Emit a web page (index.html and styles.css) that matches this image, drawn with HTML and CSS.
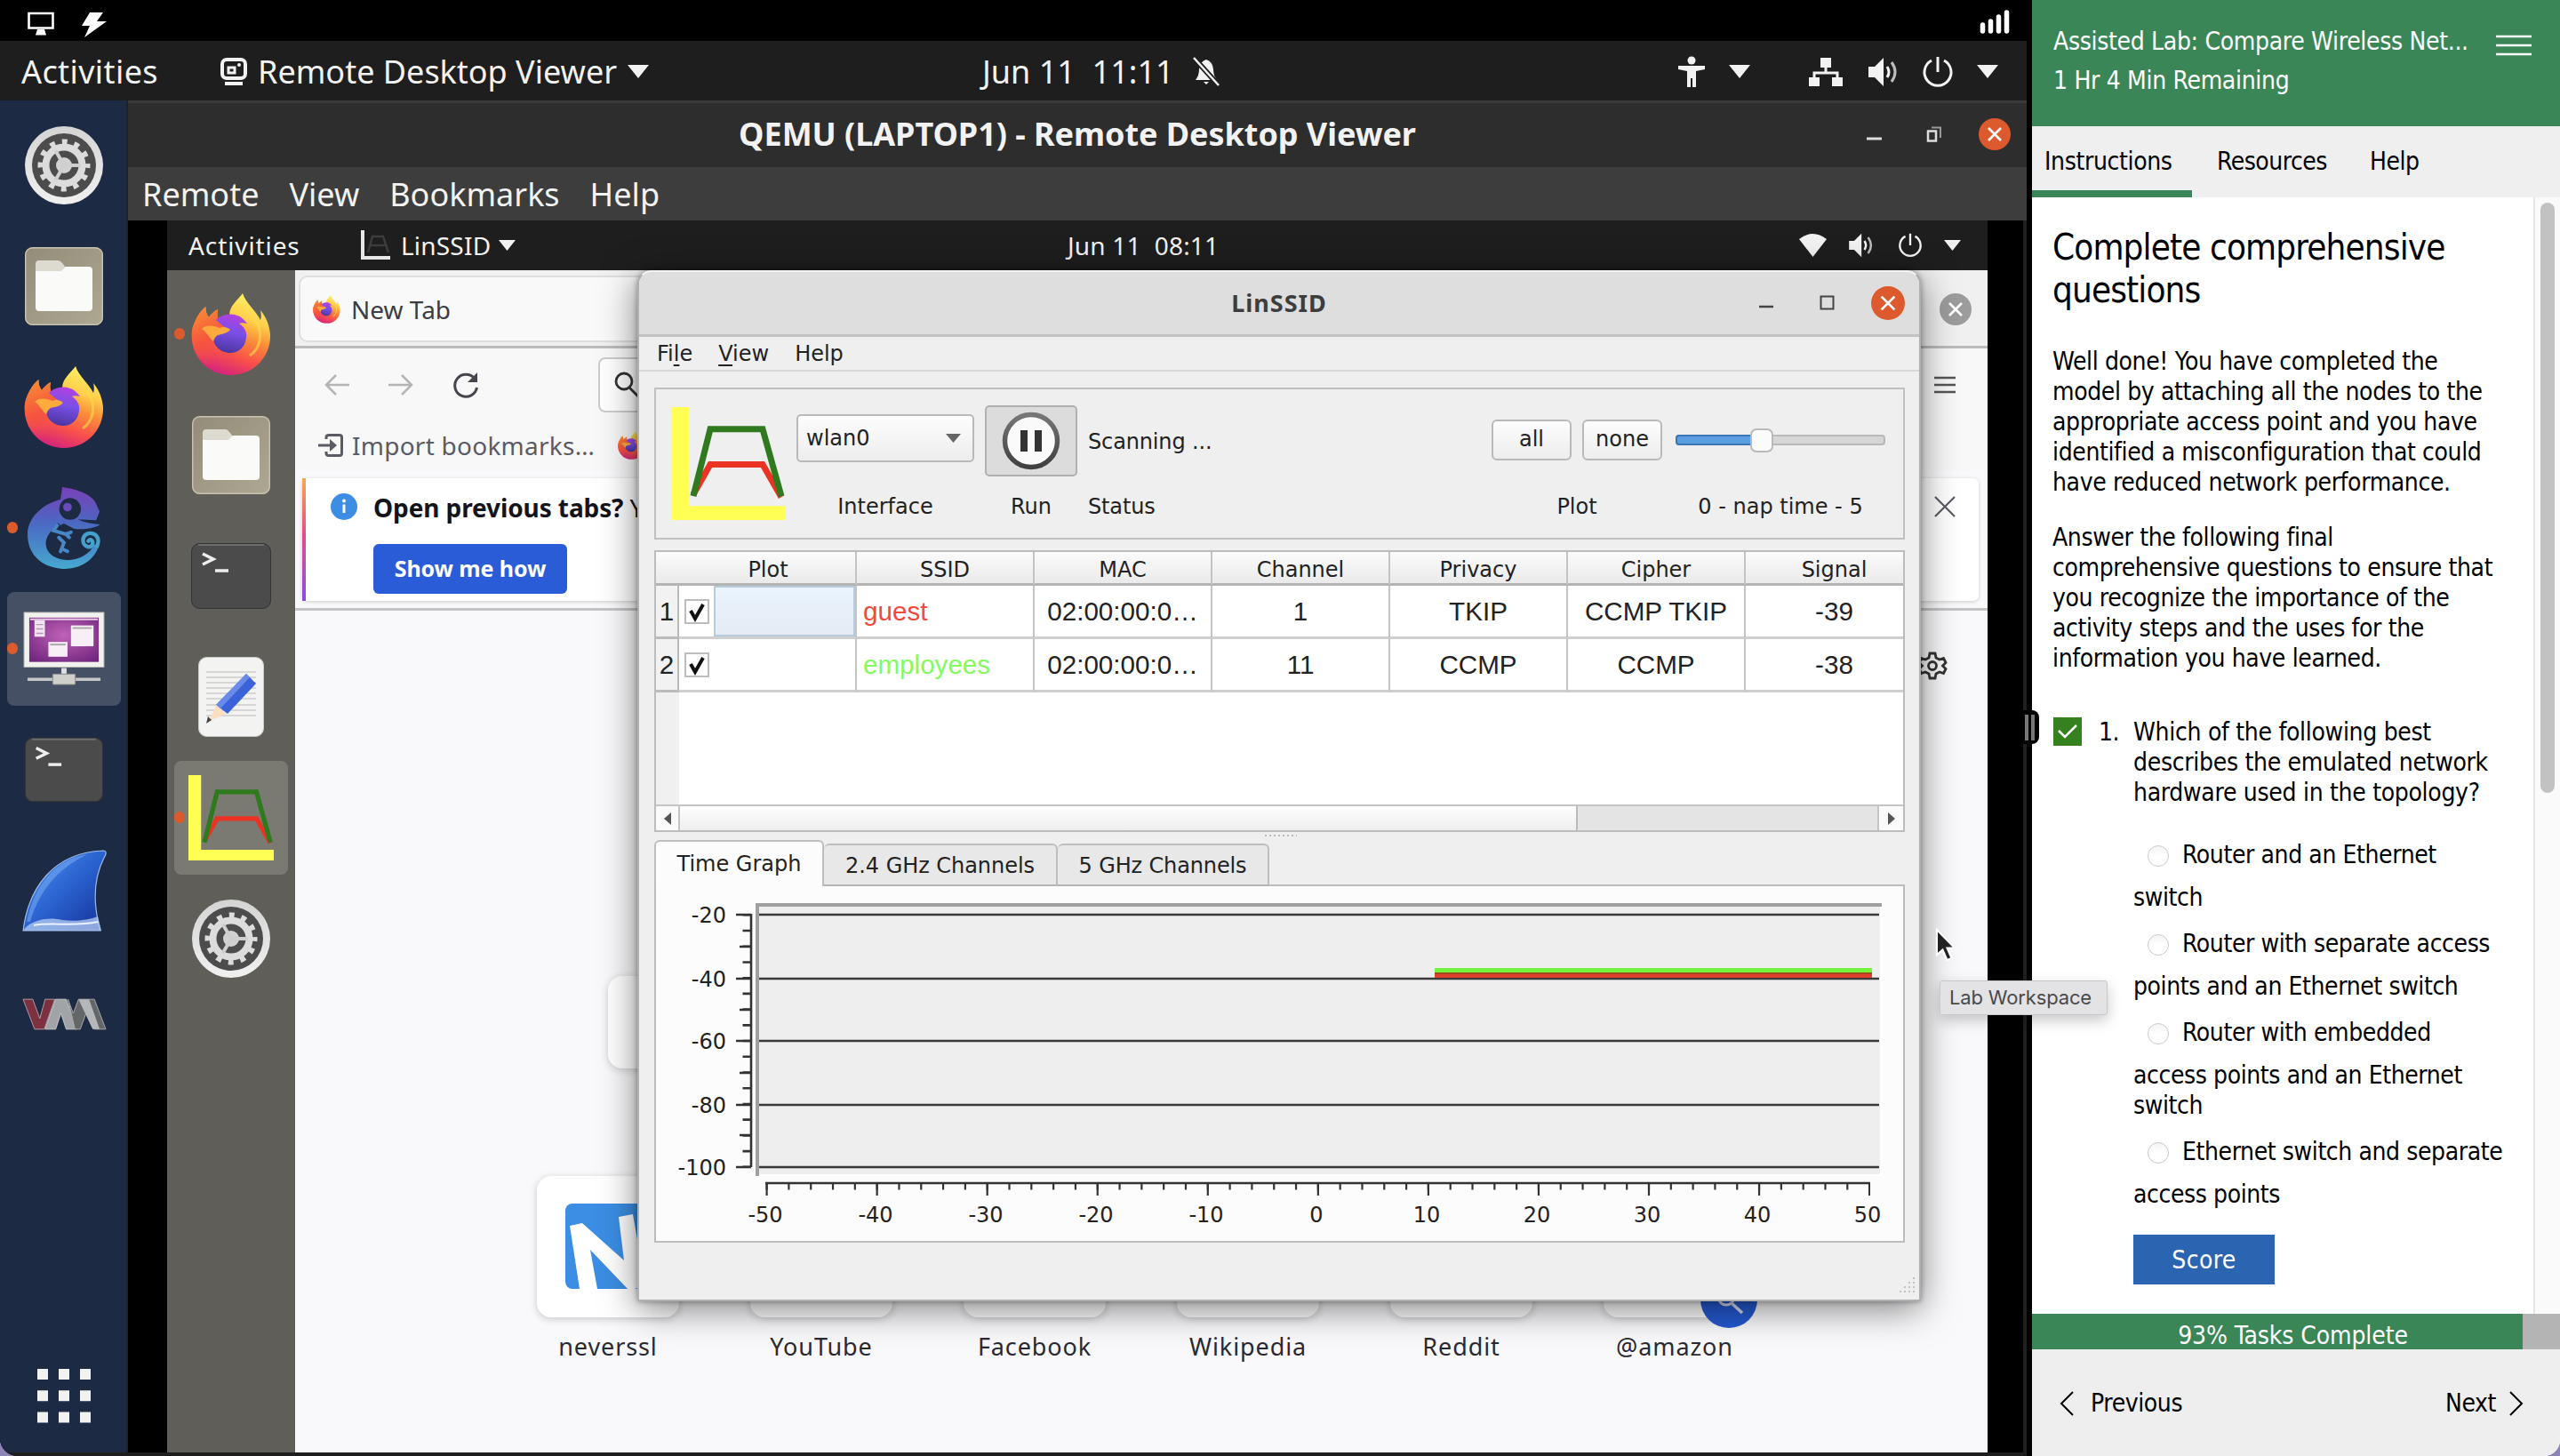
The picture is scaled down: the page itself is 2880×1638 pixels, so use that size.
FILE: index.html
```html
<!DOCTYPE html>
<html lang="en">
<head>
<meta charset="utf-8">
<title>Assisted Lab: Compare Wireless Networks</title>
<link rel="stylesheet" href="styles.css">
</head>
<body>
<svg width="0" height="0" class="defs">
  <defs>
    <linearGradient id="fx-body" x1=".75" y1="0" x2=".4" y2="1">
      <stop offset="0" stop-color="#fff36a"/><stop offset=".3" stop-color="#ffcf4a"/><stop offset=".5" stop-color="#fb9038"/><stop offset=".75" stop-color="#f9504a"/><stop offset="1" stop-color="#d6247c"/>
    </linearGradient>
    <linearGradient id="fx-left" x1="0" y1="0" x2=".3" y2="1">
      <stop offset="0" stop-color="#f79433"/><stop offset=".6" stop-color="#f7533f"/><stop offset="1" stop-color="#f04a52" stop-opacity="0"/>
    </linearGradient>
    <linearGradient id="fx-globe" x1=".6" y1="0" x2=".4" y2="1">
      <stop offset="0" stop-color="#b341e0"/><stop offset=".45" stop-color="#7a4fe8"/><stop offset="1" stop-color="#4b369f"/>
    </linearGradient>
    <linearGradient id="gecko" x1="0" y1="0" x2="0" y2="1">
      <stop offset="0" stop-color="#7a3fb8"/><stop offset=".45" stop-color="#4a69c2"/><stop offset="1" stop-color="#45aad0"/>
    </linearGradient>
    <linearGradient id="shark" x1="0" y1="0" x2="1" y2="1">
      <stop offset="0" stop-color="#4d94f0"/><stop offset=".5" stop-color="#2a62cf"/><stop offset="1" stop-color="#142f94"/>
    </linearGradient>
    <linearGradient id="metal" x1="0" y1="0" x2="0" y2="1">
      <stop offset="0" stop-color="#d4d4d4"/><stop offset="1" stop-color="#f0f0f0"/>
    </linearGradient>
    <linearGradient id="khaki" x1="0" y1="0" x2="1" y2="1">
      <stop offset="0" stop-color="#938c78"/><stop offset="1" stop-color="#aea893"/>
    </linearGradient>
    <radialGradient id="violet" cx=".5" cy=".4" r=".7">
      <stop offset="0" stop-color="#c061b8"/><stop offset="1" stop-color="#72277f"/>
    </radialGradient>
    <linearGradient id="ring" x1="0" y1="0" x2="0" y2="1">
      <stop offset="0" stop-color="#777"/><stop offset="1" stop-color="#3f3f3f"/>
    </linearGradient>
  </defs>

  <symbol id="i-firefox" viewBox="0 0 90 92">
    <path fill="url(#fx-body)" d="M58 0C52 8 43 14 43 25C38 25 34 27 31 30C29 26 29 22 30 18C26 20 22 24 20 27C17 23 16 19 16.5 15C9 21 3 32 1 42C-2 70 18 92 45 92C70 92 90 72 89 46C88 35 84 26 78 19C79 23 79 27 78 30C72 18 62 12 58 0Z"/>
    <path fill="url(#fx-left)" d="M43 25C38 25 34 27 31 30C29 26 29 22 30 18C26 20 22 24 20 27C17 23 16 19 16.5 15C9 21 3 32 1 42C-1 62 10 84 34 86C26 74 22 60 32 46Z"/>
    <path fill="url(#fx-globe)" d="M28 30C34 24 44 22 52 25C56 26 60 30 63 34C59 33 56 33 54 34C60 38 63 43 62 50C61 60 54 67 44 67C34 67 25 60 25 50C26 42 36 46 40 40Z"/>
    <path fill="#fbab3e" d="M12 40C16 35 26 36 32 39C36 37 41 38 44 41C41 45 34 46 30 47C27 49 26 51 25 54C20 50 18 44 12 40Z"/>
    <path fill="none" stroke="#ffe04f" stroke-width="3" opacity=".6" d="M72 30C82 44 78 62 66 70"/>
  </symbol>

  <symbol id="i-gear" viewBox="0 0 90 90">
    <circle cx="45" cy="45" r="44" fill="url(#metal)"/>
    <circle cx="45" cy="45" r="36" fill="#4c4c4c"/>
    <circle cx="45" cy="45" r="26.5" fill="none" stroke="#dcdcdc" stroke-width="6" stroke-dasharray="6 7.87" stroke-dashoffset="3"/>
    <circle cx="45" cy="45" r="20.5" fill="none" stroke="#dcdcdc" stroke-width="8"/>
    <circle cx="45" cy="45" r="9" fill="#d2d2d2"/>
    <path stroke="#cfcfcf" stroke-width="4" d="M45 45H64M45 45L35.5 28.5M45 45L35.5 61.5"/>
  </symbol>

  <symbol id="i-files" viewBox="0 0 90 92">
    <rect x="1" y="2" width="88" height="88" rx="9" fill="url(#khaki)"/>
    <rect x="1.7" y="2.7" width="86.600" height="86.600" rx="8" fill="none" stroke="#c8c2ae" stroke-width="1.400"/>
    <path d="M13 30V21Q13 17 17 17H38Q41 17 43 20L47 25V30Z" fill="#dddbd0"/>
    <path d="M13 29H42L47 24H73Q77 24 77 28V70Q77 74 73 74H17Q13 74 13 70Z" fill="#fafaf8"/>
  </symbol>

  <symbol id="i-terminal" viewBox="0 0 92 76">
    <rect x="1.500" y="1.500" width="89" height="73" rx="9" fill="#4b4b4b" stroke="#333"/>
    <path d="M9 3H83" stroke="#6d6d6d" stroke-width="2"/>
    <path d="M14 13L26 19L14 25" fill="none" stroke="#eee" stroke-width="3.500"/>
    <path d="M28 32H43" stroke="#eee" stroke-width="3.500"/>
  </symbol>

  <symbol id="i-gecko" viewBox="0 0 84 94">
    <path fill="url(#gecko)" d="M40 0C56 2 74 8 79 19L83 28L79 38L58 37C66 41 74 42 84 43C76 48 64 49 54 48L42 42C30 46 22 54 21 64C21 78 34 84 48 84C60 83 72 77 77 66L82 68C76 86 58 95 40 94C14 92 0 76 0 54C0 36 16 20 38 14Z"/>
    <path fill="none" stroke="#45a0cc" stroke-width="4.500" stroke-linecap="round" d="M80 68C87 52 66 48 64 60C63 70 76 72 75 63C74 60 71 60 70 62"/>
    <path fill="none" stroke="#1d2a44" stroke-width="3" d="M36 42L28 52L38 56L44 62M30 50L36 48L50 56"/>
    <path fill="none" stroke="#4787c8" stroke-width="4" stroke-linecap="round" d="M34 44L30 50L44 54L50 52M44 54L48 58M36 58L42 64L38 74M42 72L46 74"/>
    <circle cx="49" cy="25" r="12.500" fill="#1d2a44"/>
    <circle cx="46" cy="23" r="5" fill="#6a4bbd"/>
  </symbol>

  <symbol id="i-remote" viewBox="0 0 96 88">
    <rect x="2" y="2" width="92" height="63" fill="#f1f1ee" stroke="#b9b9b4"/>
    <rect x="8" y="8" width="80" height="51" fill="url(#violet)"/>
    <path d="M9 10H87" stroke="#e6c8e2" stroke-width="2"/>
    <rect x="14" y="11" width="12" height="19" fill="#f2e4f0"/>
    <path d="M16 16H24M16 21H24M16 26H24" stroke="#b69ab3" stroke-width="1.500"/>
    <rect x="56" y="17" width="26" height="24" fill="#f7eef6"/><path d="M58 20H80" stroke="#aaa" stroke-width="2"/>
    <rect x="30" y="36" width="22" height="17" fill="#f7eef6"/><path d="M32 39H50" stroke="#aaa" stroke-width="2"/>
    <rect x="45" y="66" width="6" height="8" fill="#ddd"/>
    <path d="M6 79H90" stroke="#c5c5c5" stroke-width="3.500"/>
    <rect x="35" y="73" width="26" height="12" rx="1" fill="#cfcfcc" stroke="#8b8b88"/>
  </symbol>

  <symbol id="i-shark" viewBox="0 0 96 94">
    <path d="M2 92C8 44 36 4 92 2C97 2 95 7 93 10C80 36 81 64 89 92Z" fill="url(#shark)" stroke="#9dbbe6" stroke-width="1.200"/>
    <path d="M6 82C14 44 36 12 74 6C42 22 20 46 10 82Z" fill="#7fb2f5" opacity=".5"/>
    <path d="M2 92C10 80 30 76 46 80C60 82 76 80 86 76L90 92Z" fill="#b4cdf3" opacity=".75"/>
    <path d="M14 86C34 82 60 88 86 82" stroke="#e9f1fd" stroke-width="2" fill="none"/>
  </symbol>

  <symbol id="i-vm" viewBox="0 0 96 38">
    <path d="M1 2H12L20 24L26 2H37L25 36H14Z" fill="#7c3140" stroke="#b59aa0" stroke-width="1"/>
    <path d="M26 36L38 2H50L62 36H50L44 18L38 36Z" fill="#a0a4a7" stroke="#c8c8c8" stroke-width="1"/>
    <path d="M52 2L58 18L64 2H82L95 36H82L74 14L66 36H60Z" fill="#63676a" stroke="#a8a8a8" stroke-width="1"/>
    <path d="M64 2H76L88 36H80Z" fill="#b4b8ba"/>
  </symbol>

  <symbol id="i-notes" viewBox="0 0 74 90">
    <rect x=".5" y=".5" width="73" height="89" rx="9" fill="#f3f3f2" stroke="#ccc"/>
    <path d="M9 17H65M9 23H65M9 29H65M9 35H65M9 41H65M9 47H65M9 54H65M9 60H65M9 66H65" stroke="#d6d6d6" stroke-width="2"/>
    <path d="M54 19L65 30L33 64L20 54Z" fill="#3b62d8"/><path d="M54 19L58 23L25 58L20 54Z" fill="#6b8bea"/>
    <path d="M20 54L31 64L13 72Z" fill="#fbdfc0"/><path d="M11 67L15 71L9 75Z" fill="#444"/>
  </symbol>

  <symbol id="i-linssid" viewBox="0 0 128 128" preserveAspectRatio="none">
    <path d="M0 0H19V112H128V128H0Z" fill="#ffff54"/>
    <path d="M24 99L43 65H102L123 102" fill="none" stroke="#ea3323" stroke-width="7"/>
    <path d="M24 101L43 25H102L123 101" fill="none" stroke="#2f7a1e" stroke-width="7"/>
  </symbol>

  <symbol id="i-caret" viewBox="0 0 24 15"><path d="M0 0H24L12 15Z" fill="currentColor"/></symbol>

  <symbol id="i-volume" viewBox="0 0 38 34">
    <path d="M1 11H8L18 1V33L8 23H1Z" fill="#f2f2f2"/>
    <path d="M22 11Q26 17 22 23" fill="none" stroke="#f2f2f2" stroke-width="3"/>
    <path d="M27 6Q35 17 27 28" fill="none" stroke="#bdbdbd" stroke-width="3"/>
  </symbol>
  <symbol id="i-power" viewBox="0 0 36 36">
    <path d="M11 5A15 15 0 1 0 25 5" fill="none" stroke="#f2f2f2" stroke-width="3"/>
    <path d="M18 1V18" stroke="#f2f2f2" stroke-width="3"/>
  </symbol>
  <symbol id="i-cross" viewBox="0 0 36 36">
    <circle cx="18" cy="18" r="18" fill="currentColor"/>
    <path d="M11 11L25 25M25 11L11 25" stroke="#fff" stroke-width="2.600"/>
  </symbol>
</svg>

<main class="lab">
  <section class="workspace">
    <header class="vm-bar">
      <svg width="30" height="28" viewBox="0 0 30 28"><path d="M1.500 2H28.500V18.500H1.500Z" fill="none" stroke="#fff" stroke-width="2.600"/><path d="M11 20H19L21 26.500H9Z" fill="#fff"/></svg>
      <svg class="bolt" width="30" height="30" viewBox="0 0 30 30"><path d="M10 1H25L18 11H29L4 29L10 16H1Z" fill="#fff"/></svg>
      <svg class="signal" width="34" height="26" viewBox="0 0 34 26"><path d="M3.500 24V17M12.500 24V13M21.500 24V8M30.500 24V3" transform="translate(0 -2)" stroke="#fff" stroke-width="5.500" stroke-linecap="round"/></svg>
    </header>

    <div class="host">
      <div class="top-bar host-bar">
        <span class="activities">Activities</span>
        <svg width="30" height="34" viewBox="0 0 30 34"><rect x="2" y="3" width="26" height="21" rx="5" fill="none" stroke="#f2f2f2" stroke-width="4"/><path d="M9 12H16V18H9Z" fill="none" stroke="#f2f2f2" stroke-width="3"/><circle cx="21" cy="9" r="2" fill="#f2f2f2"/><path d="M5 30H25" stroke="#f2f2f2" stroke-width="4"/></svg>
        <span class="app-name">Remote Desktop Viewer</span>
        <svg class="caret" width="24" height="15"><use href="#i-caret"/></svg>
        <div class="clock"><span>Jun 11&nbsp; 11:11</span>
          <svg width="34" height="36" viewBox="0 0 34 36"><path d="M5 27Q9 22 9 15Q10 6 17 4Q24 6 25 15Q25 22 29 27ZM14 29H20L17 32Z" fill="#f2f2f2"/><path d="M4 3L31 33" stroke="#1e1e1e" stroke-width="6"/><path d="M3 2L31 33" stroke="#f2f2f2" stroke-width="2.500"/></svg>
        </div>
        <div class="status">
          <svg width="32" height="36" viewBox="0 0 32 36"><circle cx="16" cy="5" r="4.500" fill="#f2f2f2"/><path d="M1 11H31V15L21 17V35H17V25H15V35H11V17L1 15Z" fill="#f2f2f2"/></svg>
          <svg class="gap-a" width="24" height="15"><use href="#i-caret"/></svg>
          <svg class="gap-b" width="40" height="34" viewBox="0 0 40 34"><path d="M14 1H26V12H14ZM1 23H13V33H1ZM27 23H39V33H27Z" fill="#f2f2f2"/><path d="M20 10V18M7 24V18H33V24" fill="none" stroke="#f2f2f2" stroke-width="3"/></svg>
          <svg class="gap-c" width="38" height="34"><use href="#i-volume"/></svg>
          <svg class="gap-d" width="36" height="36"><use href="#i-power"/></svg>
          <svg class="gap-a" width="24" height="15"><use href="#i-caret"/></svg>
        </div>
      </div>

      <div class="host-body">
        <nav class="dock host-dock">
          <div class="slot"><svg width="90" height="90"><use href="#i-gear"/></svg></div>
          <div class="slot"><svg width="90" height="92"><use href="#i-files"/></svg></div>
          <div class="slot"><svg width="90" height="92"><use href="#i-firefox"/></svg></div>
          <div class="slot running"><svg width="82" height="94"><use href="#i-gecko"/></svg></div>
          <div class="slot running active"><svg width="94" height="86"><use href="#i-remote"/></svg></div>
          <div class="slot"><svg width="90" height="76"><use href="#i-terminal"/></svg></div>
          <div class="slot"><svg width="96" height="94"><use href="#i-shark"/></svg></div>
          <div class="slot vm-slot"><svg width="95" height="38"><use href="#i-vm"/></svg></div>
          <svg class="apps" width="62" height="62" viewBox="0 0 62 62"><path d="M7 1V62M31 1V62M55 1V62" stroke="#f2f2f0" stroke-width="12" stroke-dasharray="12 12.200"/></svg>
        </nav>

        <div class="viewer">
          <div class="viewer-title">
            <b>QEMU (LAPTOP1) - Remote Desktop Viewer</b>
            <div class="win-buttons">
              <svg width="18" height="18" viewBox="0 0 18 18"><path d="M0 14H17" stroke="#ddd" stroke-width="3"/></svg>
              <svg width="18" height="18" viewBox="0 0 18 18"><path d="M2 5.500H11V16.500H2Z" fill="none" stroke="#ddd" stroke-width="2.500"/><path d="M6 1.500H16V13" fill="none" stroke="#999" stroke-width="2"/></svg>
              <svg class="close" width="36" height="36"><use href="#i-cross"/></svg>
            </div>
          </div>
          <div class="viewer-menu"><span>Remote</span><span>View</span><span>Bookmarks</span><span>Help</span></div>

          <div class="guest-wrap">
            <div class="guest">
              <div class="top-bar guest-bar">
                <span class="activities">Activities</span>
                <svg width="34" height="34" viewBox="0 0 34 34"><path d="M2 0V31H33" fill="none" stroke="#e8e8e8" stroke-width="4"/><path d="M8 25L13 7H25L31 25M10 17H29" fill="none" stroke="#3c3c3c" stroke-width="2.500"/></svg>
                <span class="app-name">LinSSID</span>
                <svg class="caret" width="19" height="12"><use href="#i-caret"/></svg>
                <span class="clock">Jun 11&nbsp; 08:11</span>
                <div class="status">
                  <svg width="31" height="28" viewBox="0 0 31 28"><path d="M0 7Q15.500 -5 31 7L15.500 27Z" fill="#f2f2f2"/></svg>
                  <svg width="32" height="28"><use href="#i-volume"/></svg>
                  <svg width="28" height="28"><use href="#i-power"/></svg>
                  <svg width="19" height="12"><use href="#i-caret"/></svg>
                </div>
              </div>

              <div class="guest-body">
                <nav class="dock guest-dock">
                  <div class="slot running"><svg width="90" height="92"><use href="#i-firefox"/></svg></div>
                  <div class="slot"><svg width="90" height="92"><use href="#i-files"/></svg></div>
                  <div class="slot"><svg width="92" height="76"><use href="#i-terminal"/></svg></div>
                  <div class="slot"><svg width="74" height="90"><use href="#i-notes"/></svg></div>
                  <div class="slot running active"><svg width="96" height="96"><use href="#i-linssid"/></svg></div>
                  <div class="slot"><svg width="90" height="90"><use href="#i-gear"/></svg></div>
                </nav>

                <div class="browser">
                  <div class="tab-strip">
                    <div class="tab"><svg width="31" height="32"><use href="#i-firefox"/></svg><span>New Tab</span></div>
                    <svg class="browser-close" width="36" height="36"><use href="#i-cross"/></svg>
                  </div>
                  <div class="nav-bar">
                    <svg width="28" height="28" viewBox="0 0 28 28"><path d="M28 14H2M13 3L2 14L13 25" fill="none" stroke="#b5b5b8" stroke-width="2.500"/></svg>
                    <svg width="28" height="28" viewBox="0 0 28 28"><path d="M0 14H26M15 3L26 14L15 25" fill="none" stroke="#b5b5b8" stroke-width="2.500"/></svg>
                    <svg width="30" height="30" viewBox="0 0 30 30"><path d="M25 8A12.500 12.500 0 1 0 27.500 18" fill="none" stroke="#46464e" stroke-width="3"/><path d="M28 1V12H17Z" fill="#46464e"/></svg>
                    <div class="url"><svg width="30" height="30" viewBox="0 0 30 30"><circle cx="11" cy="11" r="9" fill="none" stroke="#333" stroke-width="2.800"/><path d="M17 18L28 29" stroke="#333" stroke-width="2.800"/></svg></div>
                    <svg class="burger" width="24" height="20" viewBox="0 0 24 20"><path d="M0 2H24M0 10H24M0 18H24" stroke="#555" stroke-width="2.500"/></svg>
                  </div>
                  <div class="bookmarks">
                    <svg width="28" height="26" viewBox="0 0 28 26"><path d="M9 6V4Q9 1.500 12 1.500H24Q26.500 1.500 26.500 4V22Q26.500 24.500 24 24.500H12Q9 24.500 9 22V20" fill="none" stroke="#5b5b66" stroke-width="3"/><path d="M0 13H16" stroke="#5b5b66" stroke-width="3"/><path d="M13 6L21 13L13 20Z" fill="#5b5b66"/></svg>
                    <span>Import bookmarks…</span>
                    <svg class="mini-fox" width="31" height="32"><use href="#i-firefox"/></svg>
                  </div>
                  <div class="notice">
                    <svg class="info" width="30" height="30" viewBox="0 0 30 30"><circle cx="15" cy="15" r="15" fill="#3d8de4"/><circle cx="15" cy="8.500" r="2" fill="#fff"/><path d="M15 12.500V22" stroke="#fff" stroke-width="3"/></svg>
                    <div class="notice-body">
                      <p><b>Open previous tabs?</b> Y</p>
                      <span class="show-how">Show me how</span>
                    </div>
                    <svg class="notice-x" width="24" height="24" viewBox="0 0 24 24"><path d="M1 1L23 23M23 1L1 23" stroke="#5b5b66" stroke-width="2.200"/></svg>
                  </div>
                  <div class="page">
                    <svg class="page-gear" width="32" height="32" viewBox="0 0 32 32"><path d="M13 2H19L20 7L24 9L28.500 7.500L31 12.500L27.500 16L31 19.500L28.500 24.500L24 23L20 25L19 30H13L12 25L8 23L3.500 24.500L1 19.500L4.500 16L1 12.500L3.500 7.500L8 9L12 7Z" fill="none" stroke="#333" stroke-width="2.800"/><circle cx="16" cy="16" r="4.500" fill="none" stroke="#333" stroke-width="2.800"/></svg>
                    <div class="search-box"></div>
                    <div class="tiles">
                      <div class="tile"><div class="card"><svg width="96" height="96" viewBox="0 0 96 96"><rect width="96" height="96" rx="8" fill="#3b8ee4"/><path d="M5 25L19 22L66 64L60 15L76 12L90 92L72 98L28 52L36 96H16Z" fill="#fff"/></svg></div><span>neverssl</span></div>
                      <div class="tile"><div class="card"></div><span>YouTube</span></div>
                      <div class="tile"><div class="card"></div><span>Facebook</span></div>
                      <div class="tile"><div class="card"></div><span>Wikipedia</span></div>
                      <div class="tile"><div class="card"></div><span>Reddit</span></div>
                      <div class="tile"><div class="card"><svg class="badge" width="64" height="64" viewBox="0 0 64 64"><circle cx="32" cy="32" r="32" fill="#2459cf"/><circle cx="29" cy="29" r="9" fill="none" stroke="#d5def5" stroke-width="3"/><path d="M35 36L47 47" stroke="#d5def5" stroke-width="3.500"/></svg></div><span>@amazon</span></div>
                    </div>
                  </div>
                </div>
              </div>

              <div class="linssid">
                <div class="ls-title">
                  <b>LinSSID</b>
                  <div class="ls-buttons">
                    <svg width="17" height="17" viewBox="0 0 17 17"><path d="M0 13H16" stroke="#444" stroke-width="2.500"/></svg>
                    <svg width="17" height="17" viewBox="0 0 17 17"><path d="M1.500 1.500H15.500V15.500H1.500Z" fill="none" stroke="#444" stroke-width="2"/></svg>
                    <svg class="close" width="38" height="38"><use href="#i-cross"/></svg>
                  </div>
                </div>
                <div class="ls-menu"><span>Fi<u>l</u>e</span><span><u>V</u>iew</span><span>Help</span></div>

                <div class="toolbar">
                  <svg class="logo" width="128" height="127"><use href="#i-linssid"/></svg>
                  <div class="tool iface">
                    <div class="combo"><span>wlan0</span><svg width="17" height="10" viewBox="0 0 17 10"><path d="M0 0H17L8.500 10Z" fill="#666"/></svg></div>
                    <label>Interface</label>
                  </div>
                  <div class="tool run">
                    <div class="run-btn"><svg width="66" height="66" viewBox="0 0 66 66"><circle cx="33" cy="33" r="29.500" fill="#fafafa" stroke="url(#ring)" stroke-width="5.500"/><path d="M25 21V45M41 21V45" stroke="#333" stroke-width="8"/></svg></div>
                    <label>Run</label>
                  </div>
                  <div class="tool state"><div class="value">Scanning ...</div><label>Status</label></div>
                  <div class="tool plot-tools">
                    <div class="pair"><span class="btn">all</span><span class="btn">none</span></div>
                    <label>Plot</label>
                  </div>
                  <div class="tool nap">
                    <div class="slider"><i class="fill"></i><i class="knob"></i></div>
                    <label>0 - nap time - 5</label>
                  </div>
                </div>

                <div class="table">
                  <div class="tr th"><div class="c0">Plot</div><div>SSID</div><div>MAC</div><div>Channel</div><div>Privacy</div><div>Cipher</div><div class="last">Signal</div></div>
                  <div class="tr">
                    <div class="rn">1</div>
                    <div class="pick"><svg width="28" height="28" viewBox="0 0 28 28"><rect x="1" y="1" width="26" height="26" fill="#fff" stroke="#bdbdbd" stroke-width="2"/><path d="M7 13L12 22L21 6" fill="none" stroke="#111" stroke-width="4"/></svg><i class="sel"></i></div>
                    <div class="ssid red">guest</div><div>02:00:00:0…</div><div>1</div><div>TKIP</div><div>CCMP TKIP</div><div class="last">-39</div>
                  </div>
                  <div class="tr">
                    <div class="rn">2</div>
                    <div class="pick"><svg width="28" height="28" viewBox="0 0 28 28"><rect x="1" y="1" width="26" height="26" fill="#fff" stroke="#bdbdbd" stroke-width="2"/><path d="M7 13L12 22L21 6" fill="none" stroke="#111" stroke-width="4"/></svg></div>
                    <div class="ssid green">employees</div><div>02:00:00:0…</div><div>11</div><div>CCMP</div><div>CCMP</div><div class="last">-38</div>
                  </div>
                  <div class="blank"></div>
                  <div class="hscroll">
                    <span class="arrow"><svg width="8" height="14" viewBox="0 0 8 14"><path d="M8 0V14L0 7Z" fill="#555"/></svg></span>
                    <span class="thumb"></span><span class="trough"></span>
                    <span class="arrow right"><svg width="8" height="14" viewBox="0 0 8 14"><path d="M0 0V14L8 7Z" fill="#555"/></svg></span>
                  </div>
                </div>
                <svg class="grip" width="36" height="4" viewBox="0 0 36 4"><path d="M0 2H36" stroke="#bbb" stroke-width="2" stroke-dasharray="2 3"/></svg>

                <div class="tabs"><span class="on">Time Graph</span><span class="t2">2.4 GHz Channels</span><span class="t3">5 GHz Channels</span></div>
                <div class="pane">
                  <svg class="chart" viewBox="739 997 1402 398" width="1402" height="398">
                    <rect x="850" y="1016" width="1268" height="307" fill="#fff"/>
                    <rect x="853" y="1019" width="1262" height="302" fill="#eee"/>
                    <path d="M852 1323V1018H2117" fill="none" stroke="#a0a0a0" stroke-width="4"/>
                    <path d="M854 1029H2114M854 1101H2114M854 1171H2114M854 1243H2114M854 1313H2114" stroke="#3a3a3a" stroke-width="2.600"/>
                    <rect x="1614" y="1094" width="492" height="6" fill="#e0402c"/>
                    <rect x="1614" y="1089" width="492" height="6" fill="#73f53e"/>
                    <rect x="1614" y="1094" width="492" height="2" fill="#a04a1c"/>
                    <g stroke="#333" stroke-width="2.600" fill="none">
                      <path d="M845 1028V1313"/>
                      <path d="M828 1029H845M828 1101H845M828 1171H845M828 1243H845M828 1313H845"/>
                      <path d="M832 1065H845M832 1136H845M832 1207H845M832 1277H845"/>
                      <path d="M840 1028V1314" stroke-width="9" stroke-dasharray="2.600 15.120"/>
                      <path d="M861 1331H2104"/>
                      <path d="M861.500 1335H2104" stroke-width="7" stroke-dasharray="2.200 22.610"/>
                      <path d="M861.500 1338H2104" stroke-width="14" stroke-dasharray="2.200 121.850"/>
                    </g>
                    <g class="ylab">
                      <text x="817" y="1038">-20</text><text x="817" y="1110">-40</text><text x="817" y="1180">-60</text><text x="817" y="1252">-80</text><text x="817" y="1322">-100</text>
                    </g>
                    <g class="xlab">
                      <text x="861" y="1375">-50</text><text x="985" y="1375">-40</text><text x="1109" y="1375">-30</text><text x="1233" y="1375">-20</text><text x="1357" y="1375">-10</text><text x="1481" y="1375">0</text><text x="1605" y="1375">10</text><text x="1729" y="1375">20</text><text x="1853" y="1375">30</text><text x="1977" y="1375">40</text><text x="2101" y="1375">50</text>
                    </g>
                  </svg>
                </div>
                <div class="ls-foot"><svg width="22" height="22" viewBox="0 0 22 22"><g fill="#c2c2c2"><path d="M18 0h2v2h-2zM18 5h2v2h-2zM13 5h2v2h-2zM18 10h2v2h-2zM13 10h2v2h-2zM8 10h2v2H8zM18 15h2v2h-2zM13 15h2v2h-2zM8 15h2v2H8zM3 15h2v2H3z"/></g></svg></div>
              </div>
            </div>
          </div>
        </div>
      </div>
    </div>
  </section>

  <aside class="panel">
    <header class="panel-head">
      <div><div>Assisted Lab: Compare Wireless Net...</div><div>1 Hr 4 Min Remaining</div></div>
      <svg width="40" height="24" viewBox="0 0 40 24"><path d="M0 2H40M0 12H40M0 22H40" stroke="#fff" stroke-width="2.500"/></svg>
    </header>
    <nav class="panel-tabs"><span class="on">Instructions</span><span>Resources</span><span>Help</span></nav>
    <div class="panel-main">
      <article class="content">
        <h2>Complete comprehensive<br>questions</h2>
        <p>Well done! You have completed the<br>model by attaching all the nodes to the<br>appropriate access point and you have<br>identified a misconfiguration that could<br>have reduced network performance.</p>
        <p>Answer the following final<br>comprehensive questions to ensure that<br>you recognize the importance of the<br>activity steps and the uses for the<br>information you have learned.</p>
        <div class="question">
          <svg width="32" height="32" viewBox="0 0 32 32"><rect width="32" height="32" fill="#35801f"/><path d="M6 15L13 22L26 9" fill="none" stroke="#fff" stroke-width="2.500"/></svg>
          <span class="num">1.</span>
          <div class="q">
            <div class="ask">Which of the following best<br>describes the emulated network<br>hardware used in the topology?</div>
            <div class="options">
              <div class="opt"><div class="first"><i class="radio"></i>Router and an Ethernet</div>switch</div>
              <div class="opt"><div class="first"><i class="radio"></i>Router with separate access</div>points and an Ethernet switch</div>
              <div class="opt"><div class="first"><i class="radio"></i>Router with embedded</div>access points and an Ethernet<br>switch</div>
              <div class="opt"><div class="first"><i class="radio"></i>Ethernet switch and separate</div>access points</div>
            </div>
            <span class="score">Score</span>
          </div>
        </div>
      </article>
      <div class="vscroll"><i></i></div>
    </div>
    <div class="progress"><span>93% Tasks Complete</span></div>
    <footer class="pager">
      <span><svg width="16" height="28" viewBox="0 0 16 28"><path d="M15 1L2 14L15 27" fill="none" stroke="#000" stroke-width="2"/></svg>Previous</span>
      <span>Next<svg width="16" height="28" viewBox="0 0 16 28"><path d="M1 1L14 14L1 27" fill="none" stroke="#000" stroke-width="2"/></svg></span>
    </footer>
  </aside>

  <div class="splitter"><i></i><i></i></div>
  <svg class="cursor" width="26" height="38" viewBox="0 0 26 38"><path d="M2 1V29L8.500 23.500L13.500 35L18.500 33L13.500 21.500H22Z" fill="#222" stroke="#fff" stroke-width="2"/></svg>
  <div class="tooltip">Lab Workspace</div>
</main>
</body>
</html>
```
FILE: styles.css
```css
* { box-sizing: border-box; }
body { margin: 0; background: #8d85b5; overflow: hidden; }
svg { display: block; flex: none; overflow: visible; }
i { font-style: normal; display: block; }
p, h2 { margin: 0; }
.defs { position: absolute; }

.lab { position: relative; display: flex; width: 2880px; height: 1638px; }

/* Workspace and host desktop */
.workspace {
  width: 2286px; height: 1638px; background: #000; overflow: hidden;
  display: flex; flex-direction: column; border-bottom-left-radius: 20px;
  font-family: "Noto Sans", sans-serif; color: #f2f2f2;
}
.vm-bar { height: 46px; flex: none; display: flex; padding: 13px 25px 0 31px; }
.vm-bar .bolt { margin-left: 30px; }
.vm-bar .signal { margin-left: auto; }

.host { width: 2280px; flex: 1; display: flex; flex-direction: column; background: #1e1e1e; padding-bottom: 4px; }
.top-bar { position: relative; display: flex; align-items: center; background: #1e1e1e; flex: none; white-space: nowrap; }
.host-bar { height: 67px; padding: 2px 32px 0 24px; font-size: 36px; }
.host-bar .activities { width: 224px; letter-spacing: .4px; }
.host-bar .app-name { margin-left: 12px; width: 402px; }
.host-bar .caret { margin-left: 14px; }
.host-bar .clock { margin-left: 375px; display: flex; align-items: center; gap: 19px; }
.host-bar .status { margin-left: auto; display: flex; align-items: center; }
.gap-a { margin-left: 26px; }
.gap-b { margin-left: 65px; }
.gap-c { margin-left: 27px; }
.gap-d { margin-left: 23px; }

.host-body { flex: 1; display: flex; min-height: 0; }
.dock { display: flex; flex-direction: column; align-items: center; flex: none; position: relative; }
.host-dock { width: 144px; background: #1d2a44; padding-top: 9px; box-shadow: inset -2px 0 #1a2132; }
.slot { width: 128px; height: 128px; margin-bottom: 8px; display: flex; align-items: center; justify-content: center; border-radius: 8px; position: relative; }
.slot.running::before { content: ""; position: absolute; left: 0; top: 57px; width: 12px; height: 13px; border-radius: 6px; background: #dc5b2d; }
.host-dock .active { background: #455064; }
.vm-slot { padding-top: 6px; }
.host-dock .apps { margin-top: auto; margin-bottom: 33px; }

.viewer { flex: 1; display: flex; flex-direction: column; min-width: 0; }
.viewer-title { height: 75px; background: #2d2d2d; border-top: 3px solid #3a3a3a; display: flex; align-items: center; justify-content: center; position: relative; font-size: 36px; letter-spacing: -.05px; padding-bottom: 3px; }
.win-buttons { position: absolute; right: 18px; top: 0; height: 69px; display: flex; align-items: center; gap: 49px; }
.close { color: #dd5a2e; }
.win-buttons .close { margin-left: -8px; }
.viewer-menu { height: 60px; background: #3d3d3d; display: flex; align-items: center; gap: 34px; padding-left: 16px; font-size: 36px; }
.guest-wrap { flex: 1; display: flex; min-height: 0; background: #000; padding: 0 40px 0 44px; border-right: 4px solid #202020; }

/* Guest desktop */
.guest { flex: 1; position: relative; display: flex; flex-direction: column; overflow: hidden; }
.guest-bar { height: 56px; padding: 0 30px 0 24px; font-size: 28px; letter-spacing: .2px; }
.guest-bar .activities { width: 194px; letter-spacing: .9px; }
.guest-bar .app-name { margin-left: 11px; width: 110px; }
.guest-bar .clock { margin-left: 621px; }
.guest-bar .status { margin-left: auto; display: flex; align-items: center; gap: 24px; }
.guest-body { flex: 1; display: flex; min-height: 0; }
.guest-dock { width: 144px; background: #5f5e58; padding-top: 8px; }
.guest-dock .active { background: #7a7a73; }

.browser { flex: 1; background: #f9f9fb; color: #15141a; display: flex; flex-direction: column; font-size: 28px; white-space: nowrap; }
.tab-strip { height: 88px; background: #f0f0f0; border-bottom: 3px solid #bcbcbc; display: flex; align-items: center; padding: 2px 18px 0 4px; }
.tab { width: 700px; height: 75px; background: #f9f9f9; border: 2px solid #dedede; border-radius: 10px; display: flex; align-items: center; padding-left: 14px; gap: 12px; color: #3d3d44; }
.browser-close { margin-left: auto; color: #9c9c9c; }
.nav-bar { height: 82px; display: flex; align-items: center; padding: 0 36px 0 33px; gap: 44px; background: #f8f8f9; }
.url { margin-left: 90px; width: 1250px; height: 62px; background: #fff; border: 2px solid #ccc; border-radius: 8px; padding: 14px 0 0 16px; }
.burger { margin-left: auto; }
.bookmarks { height: 55px; display: flex; align-items: center; padding-left: 26px; padding-bottom: 1px; background: #f8f8f9; color: #5b5b66; letter-spacing: .25px; }
.bookmarks span { margin-left: 10px; width: 299px; }
.notice { margin: 9px 10px 8px 8px; height: 138px; background: #fff; display: flex; position: relative; padding: 17px 26px 0 32px; border-radius: 6px; box-shadow: 0 1px 4px rgba(0,0,0,.18); flex: none; }
.notice::before { content: ""; position: absolute; left: 0; top: 0; bottom: 0; width: 4px; background: linear-gradient(#f9a847, #ec4b88 45%, #8a4bea); }
.notice-body { margin-left: 18px; margin-top: -5px; display: flex; flex-direction: column; align-items: flex-start; }
.notice p { line-height: 42px; letter-spacing: -.1px; }
.show-how { margin-top: 20px; width: 218px; height: 56px; line-height: 55px; border-radius: 6px; background: #2a5cd8; color: #fff; font-weight: bold; font-size: 25px; text-align: center; letter-spacing: -.1px; }
.notice-x { margin: 3px 0 0 auto; }
.page { flex: 1; border-top: 3px solid #c4c4c4; position: relative; display: flex; flex-direction: column; }
.page-gear { position: absolute; right: 46px; top: 46px; }
.search-box { margin: 411px 0 0 352px; width: 1200px; height: 104px; border-radius: 16px; background: #fff; box-shadow: 0 2px 10px rgba(0,0,0,.18); flex: none; }
.tiles { margin: 121px 0 0 272px; display: flex; gap: 80px; }
.tile { width: 160px; display: flex; flex-direction: column; align-items: center; color: #2b2a33; font-size: 27px; letter-spacing: .9px; }
.tile span { margin-top: 16px; line-height: 34px; }
.card { position: relative; width: 160px; height: 159px; border-radius: 16px; background: #fff; box-shadow: 0 2px 10px rgba(0,0,0,.2); padding: 31px 32px; }
.badge { position: absolute; left: 109px; top: 107px; }

/* LinSSID window */
.linssid { position: absolute; left: 529px; top: 56px; width: 1444px; height: 1160px; background: #efefef; border: 2px solid #b0b0b0; border-top-color: #f4f4f4; border-radius: 16px 16px 0 0; box-shadow: 0 8px 40px rgba(0,0,0,.5), 0 0 6px rgba(0,0,0,.35); display: flex; flex-direction: column; color: #222; font: 24px "DejaVu Sans", sans-serif; white-space: nowrap; }
.ls-title { height: 73px; flex: none; background: #dedede; border-bottom: 3px solid #c2c2c2; border-radius: 14px 14px 0 0; display: flex; align-items: center; justify-content: center; position: relative; font: 27px "Noto Sans", sans-serif; letter-spacing: 1px; color: #3d3d3d; padding-bottom: 1px; }
.ls-buttons { position: absolute; right: 16px; top: 0; height: 69px; display: flex; align-items: center; gap: 51px; }
.ls-buttons .close { margin-left: -10px; }
.ls-menu { height: 39px; flex: none; border-bottom: 2px solid #d8d8d8; display: flex; align-items: center; padding-left: 20px; gap: 29px; }
.ls-menu u { text-underline-offset: 4px; text-decoration-thickness: 2px; }
.toolbar { margin: 18px 16px 0 17px; height: 171px; flex: none; border: 2px solid #c0c0c0; display: flex; padding: 18px 20px 0 18px; }
.logo { margin: 2px 0 0; }
.tool { display: flex; flex-direction: column; align-items: center; }
.tool label { margin-top: auto; line-height: 28px; margin-bottom: 21px; }
.iface { margin-left: 12px; padding-top: 10px; }
.combo { width: 200px; height: 54px; border: 2px solid #b9b9b9; border-radius: 5px; background: linear-gradient(#fdfdfd, #ededed); display: flex; align-items: center; justify-content: space-between; padding: 0 13px 0 9px; }
.run { margin-left: 12px; }
.run-btn { width: 104px; height: 80px; border: 2px solid #b0b0b0; border-radius: 5px; background: #dcdcdc; display: flex; align-items: center; justify-content: center; }
.state { margin-left: 12px; align-items: flex-start; letter-spacing: -.15px; }
.value { line-height: 30px; margin-top: 26px; }
.plot-tools { margin-left: auto; padding-top: 16px; }
.pair { display: flex; gap: 12px; }
.btn { width: 90px; height: 46px; line-height: 41px; border: 2px solid #b9b9b9; border-radius: 6px; background: linear-gradient(#fdfdfd, #ededed); text-align: center; }
.nap { margin-left: 15px; padding-top: 33px; }
.slider { width: 236px; height: 12px; border: 2px solid #b9b9b9; border-radius: 4px; background: #d6d6d6; position: relative; }
.fill { position: absolute; left: -2px; top: -2px; width: 90px; height: 12px; border: 2px solid #3a76b4; border-radius: 4px; background: #5c9fe0; }
.knob { position: absolute; left: 82px; top: -9px; width: 26px; height: 27px; border: 2px solid #b9b9b9; border-radius: 7px; background: #fbfbfb; }

.table { margin: 12px 16px 0 17px; height: 317px; flex: none; border: 2px solid #bcbcbc; background: #fff; display: flex; flex-direction: column; overflow: hidden; }
.tr { display: grid; grid-template-columns: 26px 200px 200px 200px 200px 200px 200px 177px; height: 60px; flex: none; font: 29.6px "Liberation Sans", sans-serif; }
.tr > div { border-right: 2px solid #c4c4c4; border-bottom: 3px solid #cfcfcf; display: flex; align-items: center; justify-content: center; }
.tr > .last { border-right: 0; justify-content: center; padding-left: 22px; }
.tr > .rn { background: #f2f2f2; border-color: #bbb; }
.tr > .ssid { justify-content: flex-start; padding-left: 7px; }
.th { height: 38px; font: 24px "DejaVu Sans", sans-serif; background: linear-gradient(#fbfbfb, #e9e9e9); }
.th > div { border-bottom-color: #b4b4b4; padding-top: 4px; }
.th > .c0 { grid-column: span 2; padding-left: 28px; }
.red { color: #f04a3c; }
.green { color: #83fb60; }
.tr > .pick { justify-content: flex-start; padding-left: 6px; }
.sel { align-self: stretch; flex: 1; margin-left: 5px; border: 2px solid #b8cbdc; background: linear-gradient(#eaf4fe, #e4ebf3); }
.blank { flex: 1; border-left: 26px solid #f0f0f0; }
.hscroll { height: 29px; border-top: 2px solid #c4c4c4; display: flex; }
.arrow { width: 27px; border-right: 2px solid #c4c4c4; background: #fafafa; display: flex; align-items: center; justify-content: center; }
.arrow.right { border-left: 2px solid #c4c4c4; border-right: 0; width: 29px; }
.thumb { width: 1010px; background: linear-gradient(#fff, #eee); border-right: 2px solid #bbb; }
.trough { flex: 1; background: #e4e4e4; }
.grip { margin: 2px auto 0; transform: translateX(2px); }

.tabs { display: flex; align-items: flex-end; height: 52px; flex: none; padding-left: 17px; margin-top: 3px; position: relative; z-index: 1; }
.tabs span { height: 48px; border: 2px solid #bebebe; border-left: 0; border-bottom-color: #b4b4b4; border-radius: 6px 6px 0 0; background: #e8e8e8; line-height: 46px; text-align: center; }
.tabs .on { width: 191px; height: 52px; background: #fcfcfc; border: 2px solid #bebebe; border-bottom: 0; line-height: 50px; }
.tabs .t2 { width: 263px; letter-spacing: -.05px; }
.tabs .t3 { width: 238px; letter-spacing: -.14px; }
.pane { margin: -2px 16px 0 17px; height: 403px; flex: none; border: 2px solid #bcbcbc; background: #fcfcfc; padding-left: 1px; }
.chart text { font: 24px "DejaVu Sans", sans-serif; fill: #222; }
.ylab { text-anchor: end; }
.xlab { text-anchor: middle; }
.ls-foot { flex: 1; display: flex; align-items: flex-end; justify-content: flex-end; padding: 0 3px 3px 0; }

/* Instruction panel */
.panel { width: 594px; height: 1638px; display: flex; flex-direction: column; background: #fff; color: #000; font: 28px/34px "DejaVu Sans Condensed", "DejaVu Sans", sans-serif; letter-spacing: -.4px; white-space: nowrap; border-bottom-right-radius: 18px; overflow: hidden; }
.panel-head { height: 142px; flex: none; background: #3a8657; color: #fff; display: flex; justify-content: space-between; padding: 25px 32px 0 24px; line-height: 44px; letter-spacing: -.32px; }
.panel-head svg { margin-top: 14px; }
.panel-tabs { height: 80px; flex: none; background: #efefef; display: flex; }
.panel-tabs span { padding: 1px 23px 0 25px; line-height: 77px; letter-spacing: -.5px; }
.panel-tabs .on { width: 180px; padding: 1px 0 0 14px; margin-right: 3px; border-bottom: 8px solid #3a8657; letter-spacing: -.36px; }
.panel-main { height: 1256px; flex: none; display: flex; }
.content { width: 564px; padding: 32px 0 0 23px; }
.content h2 { font-size: 40px; font-weight: normal; line-height: 48px; letter-spacing: -.87px; margin-bottom: 40px; }
.content p { margin-bottom: 28px; letter-spacing: -.37px; }
.question { display: flex; margin: 49px 0 0 1px; }
.num { width: 39px; margin-left: 19px; }
.ask { letter-spacing: -.3px; }
.options { margin-top: 36px; }
.opt { margin-bottom: 18px; }
.first { display: flex; align-items: center; margin-bottom: 14px; padding-left: 16px; }
.radio { width: 24px; height: 24px; margin-right: 15px; border: 1.500px solid #c9c9c9; border-radius: 50%; background: linear-gradient(#f4f4f4, #fff 50%); margin-top: 2px; }
.score { display: block; margin-top: 28px; width: 159px; height: 56px; line-height: 57px; background: #2b65b1; color: #fff; text-align: center; letter-spacing: .4px; }
.vscroll { flex: 1; background: #fafafa; border-left: 2px solid #e6e6e6; padding: 6px 0 0 6px; }
.vscroll i { width: 16px; height: 664px; border-radius: 8px; background: #c2c2c2; }
.progress { height: 40px; flex: none; background: linear-gradient(90deg, #3a8657 552px, #b4b4b4 552px); color: #fff; text-align: center; line-height: 49px; letter-spacing: -.1px; overflow: hidden; padding-right: 7px; }
.pager { flex: 1; background: #eee; display: flex; justify-content: space-between; padding: 44px 41px 0 31px; }
.pager span { display: flex; height: 34px; align-items: center; }
.pager span:first-child { gap: 19px; }
.pager span:last-child { gap: 15px; }

/* Overlays */
.splitter { position: absolute; left: 2272px; top: 799px; width: 22px; height: 38px; background: #000; border-radius: 0 8px 8px 0; display: flex; gap: 3px; padding: 5px 0 0 6px; }
.splitter i { width: 4px; height: 29px; background: #777; }
.cursor { position: absolute; left: 2177px; top: 1045px; }
.tooltip { position: absolute; left: 2182px; top: 1103px; width: 189px; height: 39px; background: #e3e3e5; border: 1px solid #c8c8ca; border-radius: 3px; box-shadow: 0 6px 16px rgba(0,0,0,.22); color: #4a4a4a; font: 22px/37px Inter, sans-serif; padding-left: 10px; letter-spacing: -.15px; }
```
